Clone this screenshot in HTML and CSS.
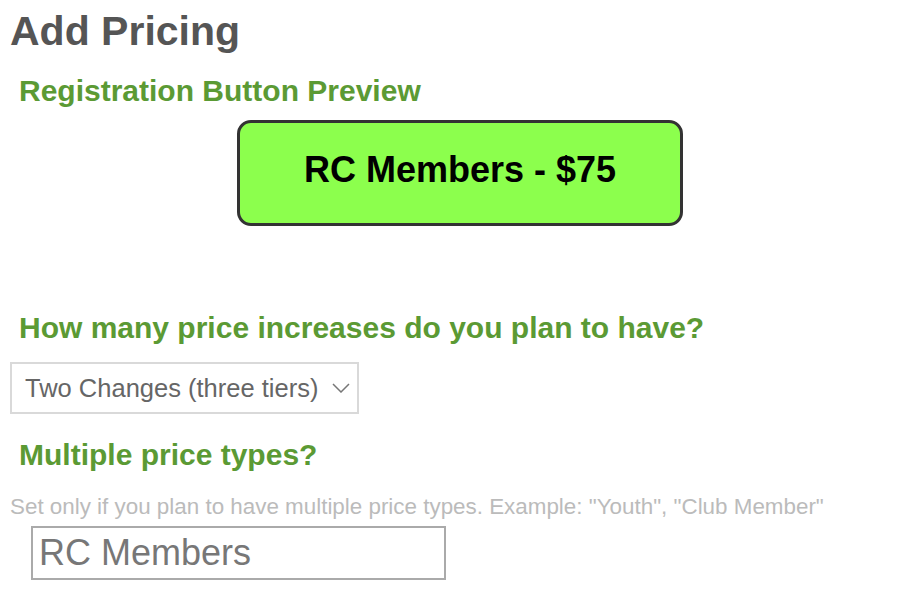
FILE: index.html
```html
<!DOCTYPE html>
<html lang="en">
<head>
    <meta charset="UTF-8">
    <meta name="viewport" content="width=device-width, initial-scale=1.0">
    <title>Add Pricing</title>
    <link rel="stylesheet" href="styles.css">
</head>
<body>
    <div class="page">
        <h1>Add Pricing</h1>

        <h3 class="label">Registration Button Preview</h3>
        <div class="preview">
            <button class="reg-button">RC Members - $75</button>
        </div>

        <h3 class="label">How many price increases do you plan to have?</h3>
        <div class="select-wrap">
            <select class="tiers">
                <option>Two Changes (three tiers)</option>
                <option>No Changes (one tier)</option>
                <option>One Change (two tiers)</option>
            </select>
            <svg class="chevron" width="18" height="10" viewBox="0 0 18 10">
                <path d="M1 1 L9 9 L17 1" fill="none" stroke="#777" stroke-width="1.5"/>
            </svg>
        </div>

        <h3 class="label">Multiple price types?</h3>
        <p class="hint">Set only if you plan to have multiple price types. Example: "Youth", "Club Member"</p>
        <input class="price-type" type="text" value="RC Members">
    </div>
</body>
</html>
```

FILE: styles.css
```css
body {
    font-family: 'Liberation Sans', Arial, sans-serif;
    background: #fff;
    margin: 0;
    padding: 0;
}

.page {
    padding: 7px 10px 0 10px;
}

h1 {
    font-size: 41px;
    line-height: 48px;
    color: #555;
    margin: 0;
}

.label {
    font-size: 30px;
    line-height: 34px;
    color: #5b9a34;
    margin: 0 0 0 9px;
}

h1 + .label {
    margin-top: 19px;
}

.preview {
    display: flex;
    justify-content: center;
    padding: 12px 0 85px 0;
}

.reg-button {
    width: 446px;
    height: 106px;
    margin-left: -4px;
    background: #8cff4d;
    border: 3px solid #333;
    border-radius: 14px;
    font-family: 'Liberation Sans', Arial, sans-serif;
    font-size: 36px;
    font-weight: bold;
    color: #000;
    padding: 0 0 6px 0;
}

.select-wrap {
    position: relative;
    width: 349px;
    margin-top: 17px;
}

.tiers {
    appearance: none;
    -webkit-appearance: none;
    width: 349px;
    height: 52px;
    border: 2px solid #d9d9d9;
    border-radius: 0;
    background: #fff;
    font-family: 'Liberation Sans', Arial, sans-serif;
    font-size: 25.5px;
    color: #666;
    padding: 0 0 0 13px;
}

.chevron {
    position: absolute;
    right: 9px;
    top: 21px;
    pointer-events: none;
}

.select-wrap + .label {
    margin-top: 24px;
}

.hint {
    font-size: 22.4px;
    line-height: 25px;
    color: #bbb;
    margin: 22px 0 0 0;
}

.price-type {
    display: block;
    width: 415px;
    height: 54px;
    box-sizing: border-box;
    margin: 7px 0 0 21px;
    border: 2px solid #aaa;
    font-family: 'Liberation Sans', Arial, sans-serif;
    font-size: 36px;
    color: #777;
    padding: 0 6px;
}
```
